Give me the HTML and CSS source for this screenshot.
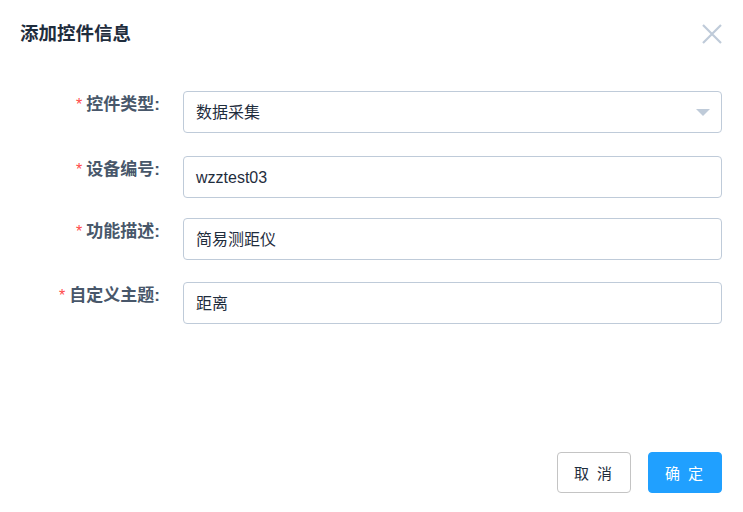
FILE: index.html
```html
<!DOCTYPE html>
<html lang="zh-CN">
<head>
    <meta charset="UTF-8">
    <title>添加控件信息</title>
    <link rel="stylesheet" href="styles.css">
</head>
<body>
    <div class="dialog">
        <div class="dialog-header">
            <span class="dialog-title">添加控件信息</span>
            <span class="dialog-close">
                <svg width="20" height="20" viewBox="0 0 20 20"><path d="M1 1L19 19M19 1L1 19" stroke="#bfcbd9" stroke-width="2.2" fill="none"/></svg>
            </span>
        </div>
        <div class="dialog-body">
            <div class="form-item">
                <label class="form-label"><i>*</i>控件类型:</label>
                <div class="form-input select">
                    <span>数据采集</span>
                    <span class="arrow"></span>
                </div>
            </div>
            <div class="form-item">
                <label class="form-label"><i>*</i>设备编号:</label>
                <div class="form-input"><span>wzztest03</span></div>
            </div>
            <div class="form-item">
                <label class="form-label"><i>*</i>功能描述:</label>
                <div class="form-input"><span>简易测距仪</span></div>
            </div>
            <div class="form-item">
                <label class="form-label"><i>*</i>自定义主题:</label>
                <div class="form-input"><span>距离</span></div>
            </div>
        </div>
        <div class="dialog-footer">
            <button class="btn">取 消</button>
            <button class="btn btn-primary">确 定</button>
        </div>
    </div>
</body>
</html>
```

FILE: styles.css
```css
*{
    padding: 0;
    margin: 0;
    box-sizing: border-box;
}
body{
    font-family: "Liberation Sans", "Noto Sans CJK SC", sans-serif;
    background-color: #fff;
    color: #1f2d3d;
}
.dialog{
    width: 743px;
    height: 512px;
    display: flex;
    flex-direction: column;
}
.dialog-header{
    display: flex;
    justify-content: space-between;
    align-items: flex-start;
    padding: 22px 21px 0 20px;
    height: 66px;
}
.dialog-title{
    font-size: 18.5px;
    font-weight: bold;
    color: #1f2d3d;
    line-height: 24px;
}
.dialog-close{
    margin-top: 2px;
    height: 20px;
}
.dialog-body{
    flex: 1;
    padding: 25px 21px 0 0;
}
.form-item{
    display: flex;
    margin-bottom: 22px;
    height: 42px;
}
.form-item:nth-child(1){
    margin-bottom: 23px;
}
.form-item:nth-child(2){
    margin-bottom: 20px;
}
.form-label{
    width: 183px;
    padding-right: 23px;
    text-align: right;
    font-size: 17px;
    font-weight: bold;
    color: #48576a;
    line-height: 28px;
}
.form-label i{
    font-style: normal;
    color: #ff4949;
    font-weight: normal;
    font-size: 16px;
    margin-right: 4px;
}
.form-input{
    flex: 1;
    height: 42px;
    border: 1px solid #bfcbd9;
    border-radius: 4px;
    padding: 2px 12px 0;
    font-size: 16px;
    line-height: 40px;
    color: #1f2d3d;
    display: flex;
    justify-content: space-between;
    align-items: center;
}
.arrow{
    width: 0;
    height: 0;
    border-left: 7px solid transparent;
    border-right: 7px solid transparent;
    border-top: 7px solid #bfcbd9;
    margin-right: -1px;
    margin-top: -2px;
}
.dialog-footer{
    display: flex;
    justify-content: flex-end;
    gap: 17px;
    padding: 0 21px 19px 0;
}
.btn{
    width: 74px;
    height: 41px;
    border: 1px solid #c4c4c4;
    border-radius: 4px;
    background-color: #fff;
    color: #1f2d3d;
    font-size: 15px;
    letter-spacing: 2px;
    font-family: "Liberation Sans", "Noto Sans CJK SC", sans-serif;
}
.btn-primary{
    background-color: #20a0ff;
    border-color: #20a0ff;
    color: #fff;
}
```
